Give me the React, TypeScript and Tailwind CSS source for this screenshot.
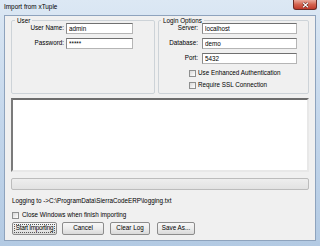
import React from "react";

const inputClass =
  "h-[11px] bg-white border border-[#b5b5b5] border-t-[#707070] border-l-[#8a8a8a] px-[2px] text-[6.3px] text-black outline-none";

const btnClass =
  "h-[13px] rounded-[2px] border border-[#8c8c8c] bg-gradient-to-b from-[#f7f7f7] via-[#ececec] to-[#d9d9d9] text-[6.3px] text-black leading-none whitespace-nowrap";

function Check({ label, className = "" }: { label: string; className?: string }) {
  return (
    <div className={`flex items-center h-[8px] gap-[2px] ${className}`}>
      <span className="w-[7px] h-[7px] border border-[#8e8f8f] bg-gradient-to-br from-[#d8d8d8] to-white shrink-0" />
      <span className="leading-none">{label}</span>
    </div>
  );
}

function Field({
  label,
  value,
  labelW,
  inputW,
  gap,
}: {
  label: string;
  value: string;
  labelW: string;
  inputW: string;
  gap: string;
}) {
  return (
    <div className={`flex items-center ${gap}`}>
      <span className={`${labelW} text-right leading-none`}>{label}</span>
      <input readOnly defaultValue={value} className={`${inputClass} ${inputW}`} />
    </div>
  );
}

export default function App() {
  return (
    <div className="w-[320px] h-[246px] flex flex-col bg-gradient-to-b from-[#dce8f4] via-[#c3d6eb] to-[#b3cae3] font-['Liberation_Sans',Arial,sans-serif] text-[6.3px] text-black overflow-hidden">
      {/* title bar */}
      <div className="h-[15px] flex items-start justify-between shrink-0">
        <span className="pl-[4px] pt-[4px] text-[6.4px] leading-none text-black">Import from xTuple</span>
        <div className="mr-[3px] w-[24px] h-[10px] rounded-b-[3px] border border-t-0 border-[#6b2b25] bg-gradient-to-b from-[#e9a99c] via-[#d4634f] to-[#c0392b] flex items-center justify-center">
          <svg width="7" height="6" viewBox="0 0 7 6">
            <path d="M1 0.8 L6 5.2 M6 0.8 L1 5.2" stroke="#5a1e18" strokeWidth="2.2" />
            <path d="M1 0.8 L6 5.2 M6 0.8 L1 5.2" stroke="#ffffff" strokeWidth="1.2" />
          </svg>
        </div>
      </div>

      {/* client area */}
      <div className="mx-[4px] flex-1 border border-[#8ea3bd] bg-[#f0f0f0] px-[6px] flex flex-col">
        <div className="flex gap-[3px] mt-[2px]">
          <fieldset className="w-[144px] border border-[#cdd3d8] rounded-[2px] pb-[4px]">
            <legend className="ml-[3px] px-[2px] leading-[5px]">User</legend>
            <div className="flex flex-col gap-[4px]">
              <Field label="User Name:" value="admin" labelW="w-[52px]" inputW="w-[67px]" gap="gap-[2px]" />
              <Field label="Password:" value="*****" labelW="w-[52px]" inputW="w-[67px]" gap="gap-[2px]" />
            </div>
          </fieldset>
          <fieldset className="w-[151px] border border-[#cdd3d8] rounded-[2px] pb-[4px]">
            <legend className="ml-[2px] px-[2px] leading-[5px]">Login Options</legend>
            <div className="flex flex-col gap-[4px]">
              <Field label="Server:" value="localhost" labelW="w-[39px]" inputW="w-[95px]" gap="gap-[4px]" />
              <Field label="Database:" value="demo" labelW="w-[39px]" inputW="w-[95px]" gap="gap-[4px]" />
              <Field label="Port:" value="5432" labelW="w-[39px]" inputW="w-[95px]" gap="gap-[4px]" />
            </div>
            <div className="flex flex-col gap-[4px] mt-[5px] pl-[30px]">
              <Check label="Use Enhanced Authentication" />
              <Check label="Require SSL Connection" />
            </div>
          </fieldset>
        </div>

        <textarea
          readOnly
          className="mt-[4px] h-[74px] w-full resize-none bg-white border-2 border-t-[#6d6d6d] border-l-[#7a7a7a] border-r-[#e8e8e8] border-b-[#e8e8e8] outline-none"
        />

        <div className="mt-[6px] h-[12px] rounded-[2px] border border-[#bcbcbc] bg-gradient-to-b from-[#eeeeee] to-[#e2e2e2]" />

        <div className="mt-[7px] h-[8px] flex items-center pl-[1px] leading-none">
          Logging to -&gt;C:\ProgramData\SierraCodeERP\logging.txt
        </div>

        <Check label="Close Windows when finish importing" className="mt-[6px] pl-[1px] gap-[3px]" />

        <div className="mt-[3px] flex pl-[1px]">
          <button
            className={`${btnClass} w-[45px] border-[#3c3c3c] tracking-[-0.25px] outline-1 outline-dotted outline-[#555] -outline-offset-[3px]`}
          >
            Start Importing
          </button>
          <button className={`${btnClass} w-[42px] ml-[5px]`}>Cancel</button>
          <button className={`${btnClass} w-[40px] ml-[6px]`}>Clear Log</button>
          <button className={`${btnClass} w-[38px] ml-[7px]`}>Save As...</button>
        </div>
      </div>

      <div className="h-[5px] shrink-0" />
    </div>
  );
}
